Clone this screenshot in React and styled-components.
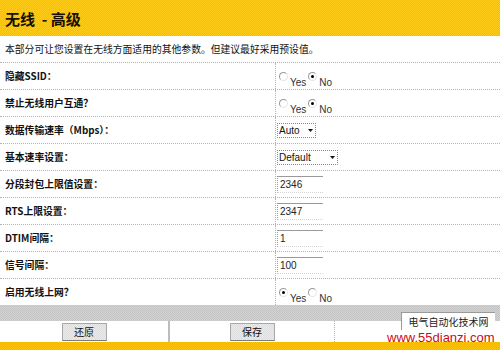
import React from "react";
import styled, { createGlobalStyle } from "styled-components";

const colors = {
  yellowA: "#fcbc00",
  yellowB: "#ffcc1a",
  greyA: "#c2c2c2",
  greyB: "#d4d4d4",
  rule: "#b4b4b4",
  text: "#111",
  red: "#cc0a14",
};

const GlobalStyle = createGlobalStyle`
  html, body {
    margin: 0;
    padding: 0;
    background: #fff;
  }
  body {
    font-family: "Liberation Sans", "Noto Sans CJK SC", sans-serif;
    color: ${colors.text};
  }
`;

const dither = (a, b) => `repeating-conic-gradient(${a} 0 25%, ${b} 0 50%) 0 0 / 2px 2px`;

const rows = [
  { label: "隐藏SSID：", type: "radio", value: "no" },
  { label: "禁止无线用户互通？", type: "radio", value: "no" },
  { label: "数据传输速率（Mbps）：", type: "select", options: ["Auto", "1", "2", "5.5", "11", "54"], width: 39 },
  { label: "基本速率设置：", type: "select", options: ["Default", "All"], width: 61 },
  { label: "分段封包上限值设置：", type: "text", value: "2346" },
  { label: "RTS上限设置：", type: "text", value: "2347" },
  { label: "DTIM间隔：", type: "text", value: "1" },
  { label: "信号间隔：", type: "text", value: "100" },
  { label: "启用无线上网？", type: "radio", value: "yes" },
];

const App = () => {
  return (
    <Page>
      <GlobalStyle />
      <Header>
        <Title>无线 &nbsp;- 高级</Title>
      </Header>
      <Intro>本部分可让您设置在无线方面适用的其他参数。但建议最好采用预设值。</Intro>

      {rows.map((row, i) => (
        <Row key={row.label} $last={i === rows.length - 1}>
          <Label>{row.label}</Label>
          <Control $top={row.type === "radio"}>{renderControl(row)}</Control>
        </Row>
      ))}

      <GreyBar />
      <ButtonRow>
        <ButtonCell $divider="solid">
          <Button type="button">还原</Button>
        </ButtonCell>
        <ButtonCell $divider="dotted">
          <Button type="button">保存</Button>
        </ButtonCell>
        <ButtonCell />
      </ButtonRow>
      <BottomBar />

      <StampBox>电气自动化技术网</StampBox>
      <StampUrl>www.55dianzi.com</StampUrl>
    </Page>
  );
};

const renderControl = (row) => {
  if (row.type === "radio") {
    return (
      <>
        <RadioOption>
          <RadioDot $checked={row.value === "yes"} />
          <RadioText>Yes</RadioText>
        </RadioOption>
        <RadioOption>
          <RadioDot $checked={row.value === "no"} />
          <RadioText>No</RadioText>
        </RadioOption>
      </>
    );
  }
  if (row.type === "select") {
    return (
      <SelectBox $w={row.width}>
        <Select defaultValue={row.options[0]}>
          {row.options.map((o) => (
            <option key={o}>{o}</option>
          ))}
        </Select>
        <Arrow>
          <svg width="5" height="3" viewBox="0 0 5 3">
            <path d="M0 0h5L2.5 3z" fill="#111" />
          </svg>
        </Arrow>
      </SelectBox>
    );
  }
  return <TextInput defaultValue={row.value} />;
};

const Page = styled.div`
  position: relative;
  width: 500px;
  height: 351px;
  overflow: hidden;
  background: #fff;
`;

const Header = styled.div`
  height: 36px;
  display: flex;
  align-items: center;
  padding-left: 5px;
  background: ${dither(colors.yellowA, colors.yellowB)};
`;

const Title = styled.h1`
  margin: 0;
  font-family: "Noto Sans CJK SC", sans-serif;
  font-size: 15px;
  font-weight: bold;
  color: #1a1000;
`;

const Intro = styled.div`
  height: 27px;
  box-sizing: border-box;
  display: flex;
  align-items: center;
  padding-left: 5px;
  font-family: "Noto Sans CJK SC", sans-serif;
  font-size: 9.8px;
  border-bottom: 1px dotted ${colors.rule};
`;

const Row = styled.div`
  display: grid;
  grid-template-columns: 276px 1fr;
  height: ${(p) => (p.$last ? "26px" : "27px")};
  box-sizing: border-box;
  border-bottom: ${(p) => (p.$last ? "none" : `1px dotted ${colors.rule}`)};
`;

const Label = styled.div`
  display: flex;
  align-items: center;
  padding-left: 5px;
  border-right: 1px dotted ${colors.rule};
  font-family: "Noto Sans CJK SC", sans-serif;
  font-size: 9.8px;
  font-weight: bold;
  white-space: nowrap;
`;

const Control = styled.div`
  display: flex;
  align-items: ${(p) => (p.$top ? "flex-start" : "center")};
  padding-top: ${(p) => (p.$top ? "9px" : "0")};
  padding-left: 1px;
`;

const RadioOption = styled.label`
  display: inline-flex;
  align-items: flex-start;
  margin-left: 2px;
`;

const RadioDot = styled.span`
  position: relative;
  width: 9px;
  height: 9px;
  box-sizing: border-box;
  border-radius: 50%;
  border: 1px solid;
  border-color: #9a9a9a #e6e6e6 #e6e6e6 #9a9a9a;
  background: #fff;

  &::after {
    content: "";
    display: ${(p) => (p.$checked ? "block" : "none")};
    position: absolute;
    left: 2px;
    top: 2px;
    width: 3px;
    height: 3px;
    border-radius: 50%;
    background: #000;
  }
`;

const RadioText = styled.span`
  margin-top: 6px;
  margin-left: 2px;
  font-size: 10px;
  line-height: 10px;
  color: #333;
`;

const SelectBox = styled.div`
  display: inline-flex;
  align-items: center;
  width: ${(p) => p.$w}px;
  height: 15px;
  box-sizing: border-box;
  border: 1px dotted #8a8a8a;
  background: #fff;
`;

const Select = styled.select`
  appearance: none;
  flex: 1;
  min-width: 0;
  border: none;
  outline: none;
  background: transparent;
  padding: 0 0 0 1px;
  font-family: "Liberation Sans", sans-serif;
  font-size: 10px;
  color: #111;
`;

const Arrow = styled.span`
  display: flex;
  align-items: center;
  justify-content: center;
  width: 10px;
  height: 100%;
`;

const TextInput = styled.input`
  width: 46px;
  height: 17px;
  box-sizing: border-box;
  margin: 0;
  padding: 0 0 0 2px;
  border: none;
  border-top: 1px solid #9a9a9a;
  border-left: 1px dotted #9a9a9a;
  border-bottom: 1px dotted #d6d6d6;
  outline: none;
  background: #fff;
  font-family: "Liberation Sans", sans-serif;
  font-size: 10px;
  color: #222;
`;

const GreyBar = styled.div`
  height: 16px;
  background: ${dither(colors.greyA, colors.greyB)};
`;

const ButtonRow = styled.div`
  display: grid;
  grid-template-columns: 170px 165px 1fr;
  height: 21px;
`;

const ButtonCell = styled.div`
  display: flex;
  align-items: center;
  justify-content: center;
  border-right: ${(p) =>
    p.$divider === "solid" ? "2px solid #bdbdbd" : p.$divider === "dotted" ? `1px dotted ${colors.rule}` : "none"};
`;

const Button = styled.button`
  width: 45px;
  height: 18px;
  padding: 0;
  box-sizing: border-box;
  border: 1px solid #a8a8a8;
  border-bottom-color: #7c7c7c;
  background: ${dither("#dcdcdc", "#ebebeb")};
  font-family: "Noto Sans CJK SC", sans-serif;
  font-size: 10px;
  color: #111;
`;

const BottomBar = styled.div`
  height: 8px;
  background: ${dither("#f2b400", "#ffc40c")};
`;

const StampBox = styled.div`
  position: absolute;
  left: 401px;
  top: 312px;
  width: 94px;
  height: 18px;
  box-sizing: border-box;
  border-top: 1px solid #9a9a9a;
  border-left: 1px solid #9a9a9a;
  background: #fff;
  font-family: "Noto Sans CJK SC", sans-serif;
  font-size: 10px;
  line-height: 17px;
  text-align: center;
  color: #222;
`;

const StampUrl = styled.div`
  position: absolute;
  left: 387px;
  top: 330px;
  font-family: "Liberation Sans", sans-serif;
  font-size: 13px;
  line-height: 16px;
  color: ${colors.red};
`;

export default App;
